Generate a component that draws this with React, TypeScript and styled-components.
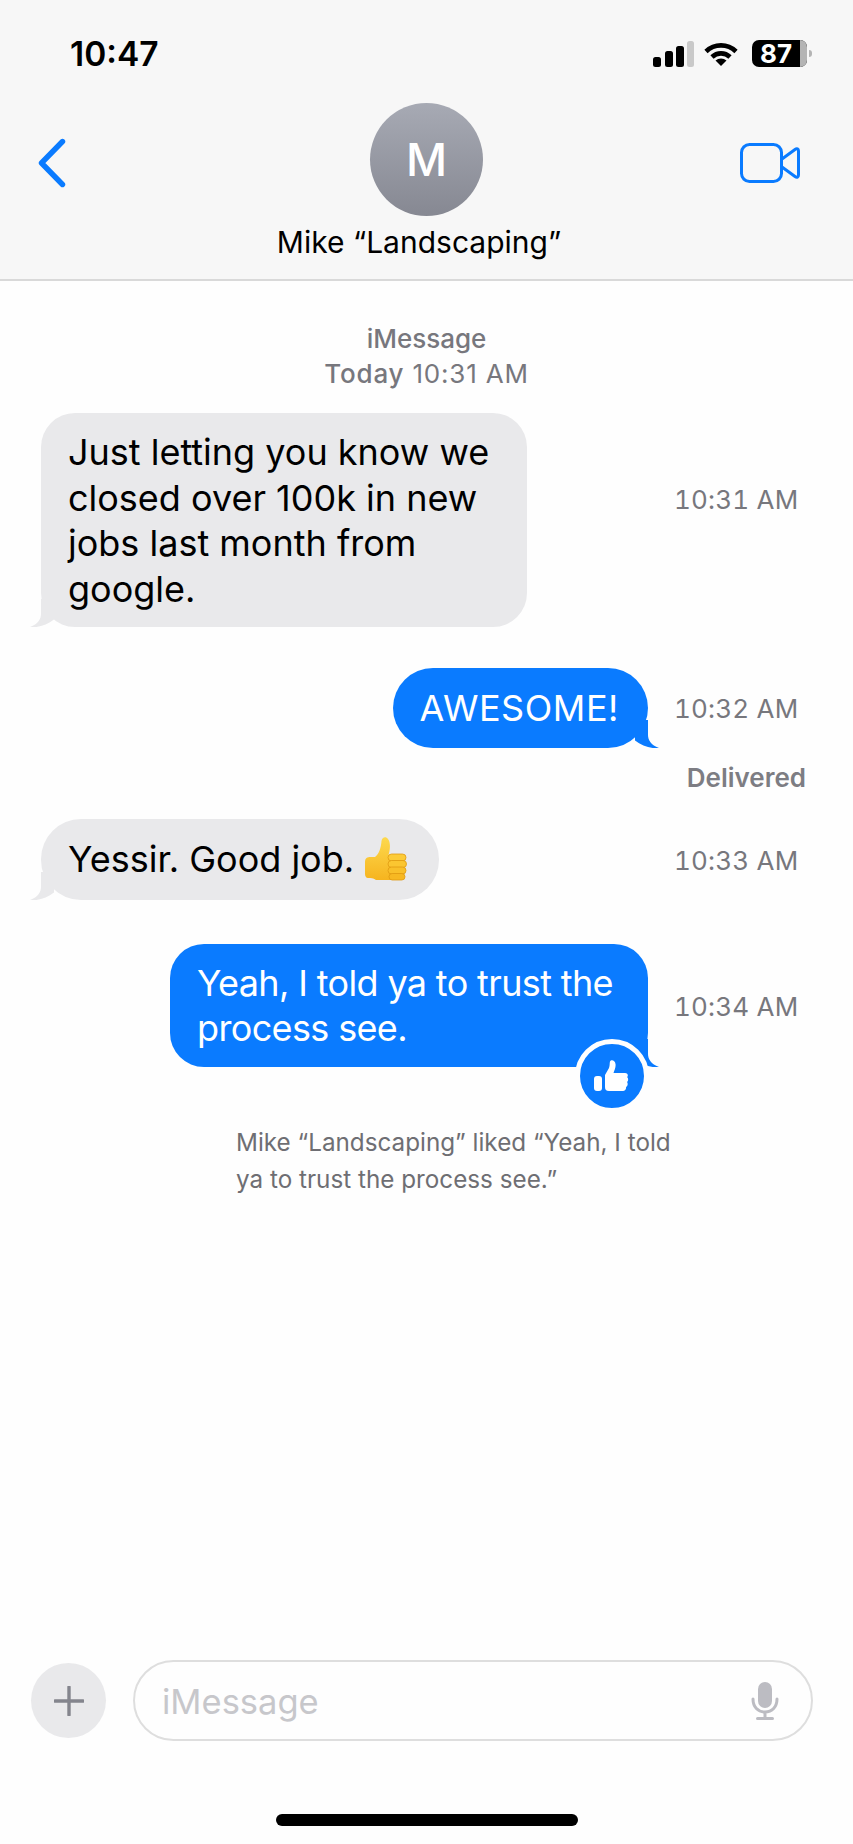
import { FC } from "react";
import styled, { createGlobalStyle } from "styled-components";

const BLUE = "#0a7bff";
const GREY_BUBBLE = "#e9e9eb";
const FONT = `Inter, "Liberation Sans", sans-serif`;

const Tail: FC<{ $out?: boolean }> = ({ $out }) => (
  <TailSvg $out={$out} viewBox="0 0 30 30" width="30" height="30">
    <path
      d="M11 2 L11 17 C11 22 8 27 0 30 C8 31 17 28 24 22.5 L24 2 Z"
      fill={$out ? BLUE : GREY_BUBBLE}
    />
  </TailSvg>
);

const Emoji = () => (
  <EmojiSvg viewBox="0 0 43 44" width="43" height="44">
    <defs>
      <linearGradient id="hand" x1="0" y1="0" x2="0" y2="1">
        <stop offset="0" stopColor="#fdd94e" />
        <stop offset="1" stopColor="#f6b41f" />
      </linearGradient>
    </defs>
    <path
      d="M1 25 C1 21 3 20 7 20 L11 20 C15 17 17 11 17.5 4 C18 0 22 -1 24 2 C27 6 26 13 24.5 18 L30 20 L30 43 L12 43 C9 41 7 41 4 41 C2 41 1 39 1 37 Z"
      fill="url(#hand)"
    />
    <rect x="24" y="17" width="18" height="7" rx="3.5" fill="#fccb38" stroke="#e09a12" strokeWidth="0.8" />
    <rect x="24" y="23.5" width="18.5" height="7" rx="3.5" fill="#fbc631" stroke="#e09a12" strokeWidth="0.8" />
    <rect x="24" y="30" width="18" height="7" rx="3.5" fill="#f9c02a" stroke="#e09a12" strokeWidth="0.8" />
    <rect x="25" y="36.5" width="16" height="6.5" rx="3.2" fill="#f7b822" stroke="#e09a12" strokeWidth="0.8" />
  </EmojiSvg>
);

export default function App() {
  return (
    <Page>
      <GlobalStyle />
      <Header>
        <StatusBar>
          <Clock>10:47</Clock>
          <StatusIcons>
            <svg width="41" height="26" viewBox="0 0 41 26">
              <rect x="0" y="16" width="8" height="10" rx="2.5" fill="#000" />
              <rect x="12" y="10" width="8" height="16" rx="2.5" fill="#000" />
              <rect x="23" y="5" width="8" height="21" rx="2.5" fill="#000" />
              <rect x="34" y="0" width="7" height="26" rx="2.5" fill="#c9c9c9" />
            </svg>
            <WifiIcon width="34" height="24" viewBox="0 0 34 24">
              <g fill="none" stroke="#000" strokeWidth="4.6">
                <path d="M2 9.5 A21.5 21.5 0 0 1 32 9.5" />
                <path d="M8 15 A13 13 0 0 1 26 15" />
              </g>
              <path d="M17 24 L11.5 18.6 A8 8 0 0 1 22.5 18.6 Z" fill="#000" />
            </WifiIcon>
            <Battery>
              87
              <BatteryRest />
              <BatteryNub />
            </Battery>
          </StatusIcons>
        </StatusBar>
        <Nav>
          <BackIcon width="30" height="50" viewBox="0 0 30 50">
            <path
              d="M25.5 3.5 L4.5 25 L25.5 46.5"
              fill="none"
              stroke={BLUE}
              strokeWidth="5.4"
              strokeLinecap="round"
              strokeLinejoin="round"
            />
          </BackIcon>
          <Contact>
            <Avatar>M</Avatar>
            <ContactName>Mike “Landscaping”</ContactName>
          </Contact>
          <VideoIcon width="60" height="40" viewBox="0 0 60 40">
            <rect x="1.5" y="1.5" width="40" height="37" rx="8" fill="none" stroke={BLUE} strokeWidth="3" />
            <path
              d="M42 16 L55 6.5 C57 5 58.5 6 58.5 8 L58.5 32 C58.5 34 57 35 55 33.5 L42 24"
              fill="none"
              stroke={BLUE}
              strokeWidth="3"
              strokeLinejoin="round"
            />
          </VideoIcon>
        </Nav>
      </Header>

      <Thread>
        <ThreadInfo>
          <ThreadTitle>iMessage</ThreadTitle>
          <ThreadTime>
            <strong>Today</strong> 10:31 AM
          </ThreadTime>
        </ThreadInfo>

        <Row $top={23}>
          <Bubble $minWidth={486}>
            Just letting you know we
            <br />
            closed over 100k in new
            <br />
            jobs last month from
            <br />
            google.
            <Tail />
          </Bubble>
          <Time $top={71}>10:31 AM</Time>
        </Row>

        <Row $top={41} $out>
          <Bubble $out $single $tracking={0.55}>
            AWESOME!
            <Tail $out />
          </Bubble>
          <Time $top={25}>10:32 AM</Time>
        </Row>
        <Delivered>Delivered</Delivered>

        <Row $top={25}>
          <Bubble $single $minWidth={398} $minHeight={81}>
            Yessir. Good job. <Emoji />
            <Tail />
          </Bubble>
          <Time $top={26}>10:33 AM</Time>
        </Row>

        <Row $top={44} $out>
          <Bubble $out $tracking={-0.64} $minWidth={478}>
            Yeah, I told ya to trust the
            <br />
            process see.
            <Tail $out />
            <Reaction>
              <svg width="36" height="32" viewBox="0 0 36 32">
                <rect x="0" y="16" width="8" height="15" rx="3" fill="#fff" />
                <path
                  d="M11 15 L15 8 C16 5 15.5 3 16 1.5 C17 -0.5 21 0 21.5 4 C22 7 20.5 10 19.5 13 L31 13 C34 13 34.5 16 33 17 C34.5 18 34.5 21 33 22 C34 23 34 26 32 27 C32.5 29 31 31 29 31 L15 31 C12 31 11 29.5 11 27 Z"
                  fill="#fff"
                />
              </svg>
            </Reaction>
          </Bubble>
          <Time $top={47}>10:34 AM</Time>
        </Row>
        <Caption>
          Mike “Landscaping” liked “Yeah, I told
          <br />
          ya to trust the process see.”
        </Caption>
      </Thread>

      <Composer>
        <PlusButton>
          <svg width="30" height="30" viewBox="0 0 30 30">
            <path d="M15 1 V29 M1 15 H29" stroke="#84858d" strokeWidth="3.4" strokeLinecap="round" />
          </svg>
        </PlusButton>
        <InputBox>
          <Placeholder>iMessage</Placeholder>
          <svg width="28" height="38" viewBox="0 0 28 38">
            <rect x="7" y="0" width="14" height="26" rx="7" fill="#bcbcc2" />
            <path
              d="M2 17 C2 25 7 30 14 30 C21 30 26 25 26 17 M14 30 V36 M6.5 36.5 H21.5"
              fill="none"
              stroke="#bcbcc2"
              strokeWidth="3"
              strokeLinecap="round"
            />
          </svg>
        </InputBox>
      </Composer>
      <HomeBar />
    </Page>
  );
}

const GlobalStyle = createGlobalStyle`
  html, body {
    margin: 0;
    padding: 0;
    background: #fefefe;
  }
`;

const Page = styled.div`
  width: 853px;
  height: 1844px;
  display: flex;
  flex-direction: column;
  overflow: hidden;
  background: #fefefe;
  font-family: ${FONT};
  color: #000;
`;

const Header = styled.header`
  height: 279px;
  flex: none;
  background: #f7f7f7;
  border-bottom: 2px solid #d9d9d9;
  display: flex;
  flex-direction: column;
`;

const StatusBar = styled.div`
  height: 27px;
  margin-top: 40px;
  padding: 0 34px 0 70px;
  display: flex;
  align-items: center;
  justify-content: space-between;
`;

const Clock = styled.div`
  font-size: 33.5px;
  font-weight: 600;
`;

const StatusIcons = styled.div`
  display: flex;
  align-items: flex-end;
  gap: 12px;
`;

const WifiIcon = styled.svg`
  margin: 0 2px 1px -2px;
`;

const Battery = styled.div`
  position: relative;
  width: 48px;
  height: 27px;
  padding-right: 7px;
  margin-right: 12px;
  border-radius: 7px;
  background: #000;
  color: #fff;
  font-size: 26px;
  font-weight: 700;
  line-height: 27px;
  text-align: center;
`;

const BatteryRest = styled.span`
  position: absolute;
  left: 48px;
  top: 0;
  width: 7px;
  height: 27px;
  border-radius: 0 7px 7px 0;
  background: #b4b4b4;
`;

const BatteryNub = styled.span`
  position: absolute;
  left: 57px;
  top: 10px;
  width: 3px;
  height: 7px;
  border-radius: 0 3px 3px 0;
  background: #b4b4b4;
`;

const Nav = styled.div`
  margin-top: 36px;
  padding: 0 53px;
  display: grid;
  grid-template-columns: 1fr auto 1fr;
  align-items: start;
`;

const BackIcon = styled.svg`
  margin: 35px 0 0 -16px;
`;

const VideoIcon = styled.svg`
  margin-top: 40px;
  justify-self: end;
`;

const Contact = styled.div`
  display: flex;
  flex-direction: column;
  align-items: center;
`;

const Avatar = styled.div`
  width: 113px;
  height: 113px;
  border-radius: 50%;
  background: linear-gradient(#a7aab4, #868892);
  color: #fff;
  font-size: 45px;
  font-weight: 500;
  display: flex;
  align-items: center;
  justify-content: center;
`;

const ContactName = styled.div`
  margin: 8px 15px 0 0;
  font-size: 30px;
  line-height: 36px;
  white-space: nowrap;
`;

const Thread = styled.main`
  flex: 1;
  display: flex;
  flex-direction: column;
  padding-top: 43px;
`;

const ThreadInfo = styled.div`
  display: flex;
  flex-direction: column;
  align-items: center;
  font-size: 26px;
  line-height: 33px;
  color: #77777d;
`;

const ThreadTitle = styled.span`
  font-weight: 500;
  margin-top: -2px;
  margin-bottom: 2px;
`;

const ThreadTime = styled.span`
  letter-spacing: 0.8px;

  strong {
    font-weight: 500;
  }
`;

const Row = styled.div<{ $top: number; $out?: boolean }>`
  margin-top: ${(p) => p.$top}px;
  padding: 0 56px 0 41px;
  display: grid;
  grid-template-columns: 1fr 122px;
  column-gap: 27px;
  align-items: start;
  justify-items: ${(p) => (p.$out ? "end" : "start")};
`;

const Bubble = styled.div<{
  $out?: boolean;
  $single?: boolean;
  $minWidth?: number;
  $minHeight?: number;
  $tracking?: number;
}>`
  position: relative;
  box-sizing: border-box;
  min-width: ${(p) => p.$minWidth ?? 0}px;
  min-height: ${(p) => p.$minHeight ?? 0}px;
  padding: ${(p) => (p.$single ? "18px 29px 16px 27px" : "17px 29px 15px 27px")};
  border-radius: ${(p) => (p.$single ? "40px" : "34px")};
  background: ${(p) => (p.$out ? BLUE : GREY_BUBBLE)};
  color: ${(p) => (p.$out ? "#fff" : "#000")};
  font-size: 36px;
  letter-spacing: ${(p) => p.$tracking ?? 0}px;
  line-height: 45.5px;
  white-space: nowrap;
`;

const TailSvg = styled.svg<{ $out?: boolean }>`
  position: absolute;
  bottom: 0;
  left: ${(p) => (p.$out ? "auto" : "-11px")};
  right: ${(p) => (p.$out ? "-11px" : "auto")};
  transform: ${(p) => (p.$out ? "scaleX(-1)" : "none")};
`;

const EmojiSvg = styled.svg`
  display: inline-block;
  vertical-align: -9px;
`;

const Time = styled.div<{ $top: number }>`
  margin: ${(p) => p.$top}px 0 0 -1px;
  justify-self: start;
  font-size: 26px;
  font-variant-numeric: tabular-nums;
  letter-spacing: 0.2px;
  line-height: 32px;
  color: #77777d;
  white-space: nowrap;
`;

const Delivered = styled.div`
  margin-top: 13px;
  padding-right: 47px;
  align-self: flex-end;
  font-size: 26px;
  font-weight: 600;
  line-height: 33px;
  color: #7d7d83;
`;

const Reaction = styled.div`
  position: absolute;
  right: -1px;
  bottom: -46px;
  width: 64px;
  height: 64px;
  border: 5px solid #fefefe;
  border-radius: 50%;
  background: ${BLUE};
  display: flex;
  align-items: center;
  justify-content: center;
`;

const Caption = styled.div`
  margin-top: 57px;
  padding-left: 236px;
  font-size: 24.25px;
  line-height: 37.5px;
  color: #6e6e73;
`;

const Composer = styled.div`
  padding: 0 40px 0 31px;
  display: flex;
  align-items: center;
  gap: 27px;
`;

const PlusButton = styled.div`
  width: 75px;
  height: 75px;
  border-radius: 50%;
  background: #e9e9eb;
  display: flex;
  align-items: center;
  justify-content: center;
`;

const InputBox = styled.div`
  flex: 1;
  height: 81px;
  box-sizing: border-box;
  padding: 0 32px 0 27px;
  border: 2px solid #dedede;
  border-radius: 41px;
  display: flex;
  align-items: center;
  justify-content: space-between;
`;

const Placeholder = styled.span`
  padding-top: 2px;
  font-size: 34.5px;
  color: #c7c7cb;
`;

const HomeBar = styled.div`
  width: 302px;
  height: 12px;
  flex: none;
  margin: 73px auto 18px;
  border-radius: 6px;
  background: #000;
`;
